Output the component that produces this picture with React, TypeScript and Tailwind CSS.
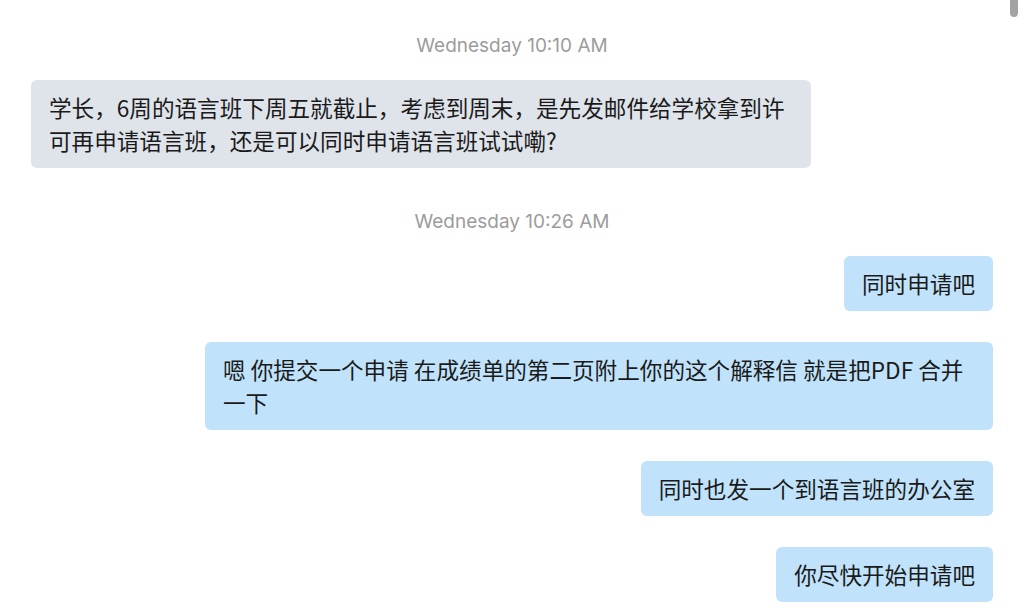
import React from "react";

const cjk = { fontFamily: '"Noto Sans CJK SC", "Noto Sans", sans-serif' };

function Stamp({ text, className = "" }: { text: string; className?: string }) {
  return (
    <div
      className={`text-center text-[19px] leading-[22px] text-[#9c9c9c] ${className}`}
      style={{ fontFamily: 'Inter, "Liberation Sans", sans-serif' }}
    >
      {text}
    </div>
  );
}

function Bubble({ text, mine }: { text: string; mine?: boolean }) {
  return (
    <div className={`flex ${mine ? "justify-end" : "justify-start"}`}>
      <div
        className={`rounded-[6px] px-[18px] py-[11px] text-[22.6px] leading-[33px] text-[#1a1a1a] ${
          mine ? "max-w-[788px] bg-[#c0e3fb]" : "max-w-[780px] bg-[#dfe3ea]"
        }`}
        style={cjk}
      >
        {text}
      </div>
    </div>
  );
}

export default function App() {
  return (
    <div className="relative w-[1024px] h-[614px] overflow-hidden bg-white">
      <div className="absolute right-[6px] top-0 h-[17px] w-[8px] rounded-b-full bg-[#a3a3a3]" />
      <div className="flex flex-col px-[31px] pt-[35px]">
        <Stamp text="Wednesday 10:10 AM" className="mb-[23px]" />
        <Bubble text="学长，6周的语言班下周五就截止，考虑到周末，是先发邮件给学校拿到许可再申请语言班，还是可以同时申请语言班试试嘞?" />
        <Stamp text="Wednesday 10:26 AM" className="mt-[43px] mb-[23px]" />
        <div className="flex flex-col gap-[31px]">
          <Bubble mine text="同时申请吧" />
          <Bubble mine text="嗯 你提交一个申请 在成绩单的第二页附上你的这个解释信 就是把PDF 合并一下" />
          <Bubble mine text="同时也发一个到语言班的办公室" />
          <Bubble mine text="你尽快开始申请吧" />
        </div>
      </div>
    </div>
  );
}
